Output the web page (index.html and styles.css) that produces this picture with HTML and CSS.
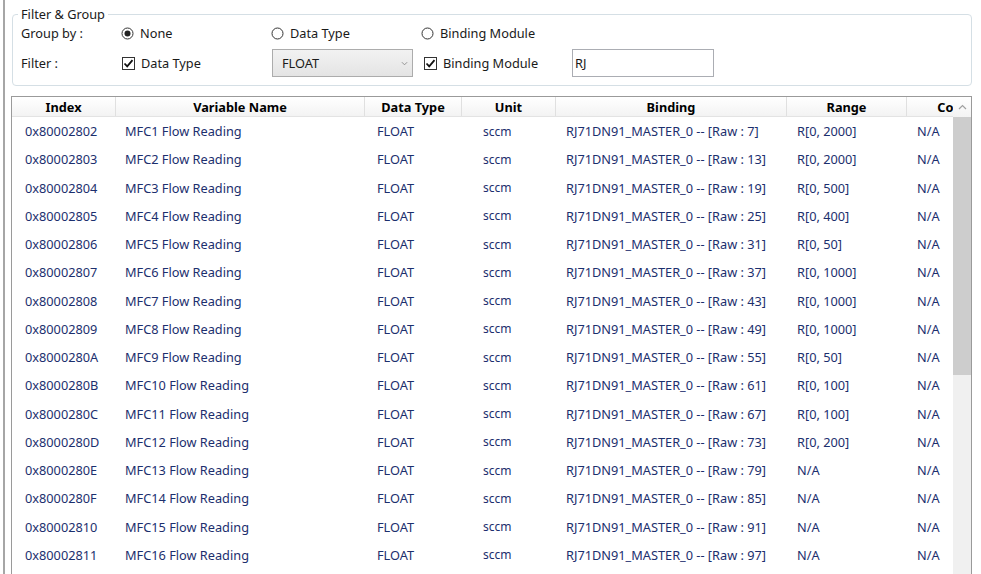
FILE: index.html
```html
<!DOCTYPE html>
<html>
<head>
<meta charset="utf-8">
<link rel="stylesheet" href="styles.css">
</head>
<body>
<div class="app">
  <fieldset class="group">
    <legend class="legend">Filter &amp; Group</legend>
    <div class="row row-top">
      <span class="lbl">Group by :</span>
      <label class="opt opt-none"><svg class="radio" viewBox="0 0 13 13"><circle cx="6.5" cy="6.5" r="5.5" fill="#fff" stroke="#333" stroke-width="1"/><circle cx="6.5" cy="6.5" r="3" fill="#222"/></svg>None</label>
      <label class="opt opt-dt"><svg class="radio" viewBox="0 0 13 13"><circle cx="6.5" cy="6.5" r="5.5" fill="#fff" stroke="#333" stroke-width="1"/></svg>Data Type</label>
      <label class="opt"><svg class="radio" viewBox="0 0 13 13"><circle cx="6.5" cy="6.5" r="5.5" fill="#fff" stroke="#333" stroke-width="1"/></svg>Binding Module</label>
    </div>
    <div class="row row-bottom">
      <span class="lbl">Filter :</span>
      <label class="opt opt-none"><svg class="check" viewBox="0 0 13 13"><rect x="0.5" y="0.5" width="12" height="12" fill="#fff" stroke="#333"/><path d="M2.5 6.5 L5.2 9.3 L10.5 3.2" fill="none" stroke="#111" stroke-width="1.8"/></svg>Data Type</label>
      <div class="combo"><span>FLOAT</span><svg class="chev" viewBox="0 0 8 5"><path d="M1 1 L4 4 L7 1" fill="none" stroke="#888" stroke-width="1"/></svg></div>
      <label class="opt opt-bm"><svg class="check" viewBox="0 0 13 13"><rect x="0.5" y="0.5" width="12" height="12" fill="#fff" stroke="#333"/><path d="M2.5 6.5 L5.2 9.3 L10.5 3.2" fill="none" stroke="#111" stroke-width="1.8"/></svg>Binding Module</label>
      <div class="textbox">RJ</div>
    </div>
  </fieldset>

  <div class="grid">
    <div class="table">
      <div class="thead">
        <div class="th c1">Index</div>
        <div class="th c2">Variable Name</div>
        <div class="th c3">Data Type</div>
        <div class="th c4">Unit</div>
        <div class="th c5">Binding</div>
        <div class="th c6">Range</div>
        <div class="th c7">Comment</div>
      </div>
      <div class="tbody">
        <div class="tr"><div class="td c1">0x80002802</div><div class="td c2">MFC1 Flow Reading</div><div class="td c3">FLOAT</div><div class="td c4 unit">sccm</div><div class="td c5">RJ71DN91_MASTER_0 -- [Raw : 7]</div><div class="td c6">R[0, 2000]</div><div class="td c7">N/A</div></div>
        <div class="tr"><div class="td c1">0x80002803</div><div class="td c2">MFC2 Flow Reading</div><div class="td c3">FLOAT</div><div class="td c4 unit">sccm</div><div class="td c5">RJ71DN91_MASTER_0 -- [Raw : 13]</div><div class="td c6">R[0, 2000]</div><div class="td c7">N/A</div></div>
        <div class="tr"><div class="td c1">0x80002804</div><div class="td c2">MFC3 Flow Reading</div><div class="td c3">FLOAT</div><div class="td c4 unit">sccm</div><div class="td c5">RJ71DN91_MASTER_0 -- [Raw : 19]</div><div class="td c6">R[0, 500]</div><div class="td c7">N/A</div></div>
        <div class="tr"><div class="td c1">0x80002805</div><div class="td c2">MFC4 Flow Reading</div><div class="td c3">FLOAT</div><div class="td c4 unit">sccm</div><div class="td c5">RJ71DN91_MASTER_0 -- [Raw : 25]</div><div class="td c6">R[0, 400]</div><div class="td c7">N/A</div></div>
        <div class="tr"><div class="td c1">0x80002806</div><div class="td c2">MFC5 Flow Reading</div><div class="td c3">FLOAT</div><div class="td c4 unit">sccm</div><div class="td c5">RJ71DN91_MASTER_0 -- [Raw : 31]</div><div class="td c6">R[0, 50]</div><div class="td c7">N/A</div></div>
        <div class="tr"><div class="td c1">0x80002807</div><div class="td c2">MFC6 Flow Reading</div><div class="td c3">FLOAT</div><div class="td c4 unit">sccm</div><div class="td c5">RJ71DN91_MASTER_0 -- [Raw : 37]</div><div class="td c6">R[0, 1000]</div><div class="td c7">N/A</div></div>
        <div class="tr"><div class="td c1">0x80002808</div><div class="td c2">MFC7 Flow Reading</div><div class="td c3">FLOAT</div><div class="td c4 unit">sccm</div><div class="td c5">RJ71DN91_MASTER_0 -- [Raw : 43]</div><div class="td c6">R[0, 1000]</div><div class="td c7">N/A</div></div>
        <div class="tr"><div class="td c1">0x80002809</div><div class="td c2">MFC8 Flow Reading</div><div class="td c3">FLOAT</div><div class="td c4 unit">sccm</div><div class="td c5">RJ71DN91_MASTER_0 -- [Raw : 49]</div><div class="td c6">R[0, 1000]</div><div class="td c7">N/A</div></div>
        <div class="tr"><div class="td c1">0x8000280A</div><div class="td c2">MFC9 Flow Reading</div><div class="td c3">FLOAT</div><div class="td c4 unit">sccm</div><div class="td c5">RJ71DN91_MASTER_0 -- [Raw : 55]</div><div class="td c6">R[0, 50]</div><div class="td c7">N/A</div></div>
        <div class="tr"><div class="td c1">0x8000280B</div><div class="td c2">MFC10 Flow Reading</div><div class="td c3">FLOAT</div><div class="td c4 unit">sccm</div><div class="td c5">RJ71DN91_MASTER_0 -- [Raw : 61]</div><div class="td c6">R[0, 100]</div><div class="td c7">N/A</div></div>
        <div class="tr"><div class="td c1">0x8000280C</div><div class="td c2">MFC11 Flow Reading</div><div class="td c3">FLOAT</div><div class="td c4 unit">sccm</div><div class="td c5">RJ71DN91_MASTER_0 -- [Raw : 67]</div><div class="td c6">R[0, 100]</div><div class="td c7">N/A</div></div>
        <div class="tr"><div class="td c1">0x8000280D</div><div class="td c2">MFC12 Flow Reading</div><div class="td c3">FLOAT</div><div class="td c4 unit">sccm</div><div class="td c5">RJ71DN91_MASTER_0 -- [Raw : 73]</div><div class="td c6">R[0, 200]</div><div class="td c7">N/A</div></div>
        <div class="tr"><div class="td c1">0x8000280E</div><div class="td c2">MFC13 Flow Reading</div><div class="td c3">FLOAT</div><div class="td c4 unit">sccm</div><div class="td c5">RJ71DN91_MASTER_0 -- [Raw : 79]</div><div class="td c6">N/A</div><div class="td c7">N/A</div></div>
        <div class="tr"><div class="td c1">0x8000280F</div><div class="td c2">MFC14 Flow Reading</div><div class="td c3">FLOAT</div><div class="td c4 unit">sccm</div><div class="td c5">RJ71DN91_MASTER_0 -- [Raw : 85]</div><div class="td c6">N/A</div><div class="td c7">N/A</div></div>
        <div class="tr"><div class="td c1">0x80002810</div><div class="td c2">MFC15 Flow Reading</div><div class="td c3">FLOAT</div><div class="td c4 unit">sccm</div><div class="td c5">RJ71DN91_MASTER_0 -- [Raw : 91]</div><div class="td c6">N/A</div><div class="td c7">N/A</div></div>
        <div class="tr"><div class="td c1">0x80002811</div><div class="td c2">MFC16 Flow Reading</div><div class="td c3">FLOAT</div><div class="td c4 unit">sccm</div><div class="td c5">RJ71DN91_MASTER_0 -- [Raw : 97]</div><div class="td c6">N/A</div><div class="td c7">N/A</div></div>
      </div>
    </div>
    <div class="scrollbar">
      <div class="sb-up"><svg viewBox="0 0 9 6" class="sb-arrow"><path d="M1 5 L4.5 1.5 L8 5" fill="none" stroke="#a0a0a0" stroke-width="1.2"/></svg></div>
      <div class="sb-thumb"></div>
    </div>
  </div>
</div>
</body>
</html>
```
FILE: styles.css
```css
html, body {
  margin: 0;
  padding: 0;
  background: #fff;
  overflow: hidden;
}
body {
  font-family: "Noto Sans", "Open Sans", sans-serif;
  font-size: 12.75px;
  color: #1a1a1a;
}
.app {
  height: 574px;
  margin-left: 3px;
  border-left: 2px solid #a6a6a6;
  padding-left: 6px;
  padding-right: 9px;
  box-sizing: border-box;
  display: flex;
  flex-direction: column;
  overflow: hidden;
}
.group {
  flex: none;
  margin: 6px 0 0 1px;
  padding: 0 0 7px 8px;
  border: 1px solid #d5dfe5;
  border-radius: 4px;
  min-width: 0;
}
.legend {
  padding: 0 3px 0 3px;
  margin-left: -3px;
  line-height: 16px;
  color: #1a1a1a;
}
.row {
  display: flex;
  align-items: center;
}
.row-top {
  height: 22px;
}
.row-bottom {
  height: 30px;
  margin-top: 4px;
}
.lbl {
  width: 101px;
}
.opt {
  display: flex;
  align-items: center;
  gap: 6px;
}
.opt-none {
  width: 150px;
}
.opt-dt {
  width: 150px;
}
.radio {
  width: 13px;
  height: 13px;
  margin-left: -1px;
}
.check {
  width: 13px;
  height: 13px;
}
.combo {
  width: 141px;
  height: 28px;
  box-sizing: border-box;
  border: 1px solid #acacac;
  background: linear-gradient(#f2f2f2, #e4e4e4);
  display: flex;
  align-items: center;
  justify-content: space-between;
  padding: 0 4px 0 9px;
  margin-right: 11px;
}
.chev {
  width: 7px;
  height: 5px;
}
.opt-bm {
  width: 148px;
}
.textbox {
  width: 142px;
  height: 28px;
  box-sizing: border-box;
  border: 1px solid #abadb3;
  display: flex;
  align-items: center;
  padding-left: 2px;
}
.grid {
  margin-top: 10px;
  flex: 1;
  border: 1px solid #9a9a9a;
  border-bottom: none;
  display: flex;
  min-height: 0;
}
.table {
  flex: 1;
  overflow: hidden;
  min-width: 0;
}
.thead {
  display: flex;
  height: 20px;
  background: linear-gradient(#ffffff, #f3f3f3);
  border-bottom: 1px solid #e3e3e3;
  box-sizing: border-box;
  white-space: nowrap;
}
.th {
  flex: none;
  font-weight: bold;
  text-align: center;
  line-height: 19px;
  padding-top: 1px;
  color: #000;
  border-right: 1px solid #e0e0e0;
  box-sizing: border-box;
  overflow: hidden;
}
.c1 { width: 104px; }
.c2 { width: 249px; }
.c3 { width: 97px; }
.c4 { width: 94px; }
.c5 { width: 231px; }
.c6 { width: 120px; }
.c7 { width: 124px; }
.tr {
  display: flex;
  height: 28.25px;
  align-items: center;
  white-space: nowrap;
}
.td {
  flex: none;
  box-sizing: border-box;
  color: #1c2f6e;
  overflow: hidden;
}
.td.c1 { padding-left: 13px; }
.td.c2 { padding-left: 9px; }
.td.c3 { padding-left: 12px; }
.td.c4 { padding-left: 21px; }
.td.c5 { padding-left: 10px; }
.td.c6 { padding-left: 10px; }
.td.c7 { padding-left: 10px; }
.unit { font-size: 12px; }
.scrollbar {
  width: 18px;
  background: #f0f0f0;
  display: flex;
  flex-direction: column;
}
.sb-up {
  height: 20px;
  background: linear-gradient(#ffffff, #f3f3f3);
  display: flex;
  align-items: center;
  justify-content: center;
}
.sb-arrow {
  width: 9px;
  height: 6px;
}
.sb-thumb {
  height: 258px;
  background: #cdcdcd;
}
```
